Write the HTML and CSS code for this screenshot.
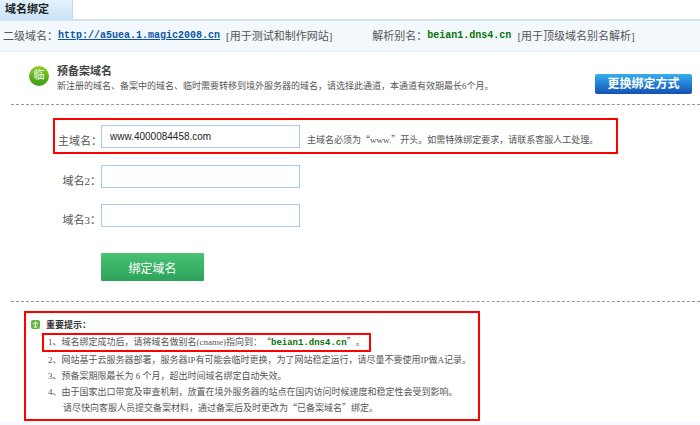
FILE: index.html
```html
<!DOCTYPE html>
<html lang="zh-CN">
<head>
  <meta charset="UTF-8">
  <meta name="viewport" content="width=device-width, initial-scale=1.0">
  <title>域名绑定</title>
  <link rel="stylesheet" href="styles.css">
</head>
<body>
  <div class="tabs">
    <h1 class="tab">域名绑定</h1>
  </div>

  <div class="info-bar">
    <div class="info">
      <span>二级域名：</span>
      <a class="host" href="http://a5uea.1.magic2008.cn">http://a5uea.1.magic2008.cn</a>
      <span class="note">[用于测试和制作网站]</span>
    </div>
    <div class="info">
      <span>解析别名：</span>
      <b class="host alias">beian1.dns4.cn</b>
      <span class="note">[用于顶级域名别名解析]</span>
    </div>
  </div>

  <div class="intro">
    <span class="badge">临</span>
    <div class="intro-text">
      <h2>预备案域名</h2>
      <p>新注册的域名、备案中的域名、临时需要转移到境外服务器的域名，请选择此通道，本通道有效期最长6个月。</p>
    </div>
    <button class="switch-btn" type="button">更换绑定方式</button>
  </div>

  <form class="bind-form">
    <div class="field marked">
      <label for="domain1">主域名：</label>
      <input type="text" id="domain1" value="www.4000084458.com">
      <span class="hint">主域名必须为<span class="quote">“</span>www.<span class="quote">”</span>开头。如需特殊绑定要求，请联系客服人工处理。</span>
    </div>
    <div class="field">
      <label for="domain2">域名2：</label>
      <input type="text" id="domain2">
    </div>
    <div class="field">
      <label for="domain3">域名3：</label>
      <input type="text" id="domain3">
    </div>
    <button class="submit-btn" type="button">绑定域名</button>
  </form>

  <div class="tips-area">
    <div class="tips">
      <h3>
        <svg class="tips-icon" width="9" height="9" viewBox="0 0 9 9">
          <rect width="9" height="9" rx="2" fill="#62b83c"/>
          <path d="M2 4.2 4.5 2 7 4.2M4.5 3v4M3 7h3" fill="none" stroke="#fff" stroke-width="1"/>
        </svg>
        重要提示：
      </h3>
      <ol>
        <li class="marked">1、域名绑定成功后，请将域名做别名(cname)指向到：<span class="quote">“</span><b class="cname">beian1.dns4.cn</b><span class="quote">”</span>。</li>
        <li>2、网站基于云服务器部署，服务器IP有可能会临时更换，为了网站稳定运行，请尽量不要使用IP做A记录。</li>
        <li>3、预备案期限最长为 6 个月，超出时间域名绑定自动失效。</li>
        <li>4、由于国家出口带宽及审查机制，放置在境外服务器的站点在国内访问时候速度和稳定性会受到影响。</li>
        <li class="more">请尽快向客服人员提交备案材料，通过备案后及时更改为<span class="quote">“</span>已备案域名<span class="quote">”</span>绑定。</li>
      </ol>
    </div>
  </div>
  <div class="page-foot"></div>
</body>
</html>
```
FILE: styles.css
```css
* {
  box-sizing: border-box;
}
body {
  margin: 0;
  background: #fff;
  color: #555;
  font-family: "Liberation Serif", "Noto Sans CJK SC", serif;
  font-size: 9px;
  text-spacing-trim: space-all;
}
h1, h2, h3, p, ol {
  margin: 0;
  padding: 0;
}
.tabs {
  display: flex;
  height: 21px;
  border-bottom: 2px solid #d3e4f1;
}
.tab {
  width: 73px;
  padding-left: 5px;
  border-right: 1px solid #c0d9ec;
  background: linear-gradient(#e4f2fc, #c9e3f7);
  color: #222;
  font-size: 11px;
  line-height: 18px;
}
.info-bar {
  display: flex;
  gap: 40px;
  height: 31px;
  padding-left: 3px;
  background: #f2f8fc;
  border-bottom: 1px solid #e9f2f9;
  font-size: 11px;
  line-height: 30px;
  white-space: nowrap;
}
.info {
  display: flex;
}
.host {
  color: #0b55a8;
  font-family: "Liberation Mono", monospace;
  font-size: 10px;
  font-weight: bold;
}
.alias {
  color: #0a720a;
}
.note {
  margin-left: 6px;
}
.intro {
  display: flex;
  margin-left: 11px;
  padding: 12px 8px 10px 18px;
  border-bottom: 1px dashed #999;
}
.badge {
  width: 20px;
  height: 20px;
  margin-top: 2px;
  border-radius: 50%;
  background: linear-gradient(#8ccf2c, #3c9a14);
  color: #fff;
  font-size: 11px;
  line-height: 19px;
  text-align: center;
}
.intro-text {
  flex: 1;
  margin-left: 8px;
  white-space: nowrap;
}
.intro h2 {
  color: #444;
  font-size: 11px;
  line-height: 15px;
}
.intro p {
  line-height: 15px;
}
button {
  padding: 0;
  border: none;
  font-family: "Liberation Sans", "Noto Sans CJK SC", sans-serif;
  color: #fff;
  font-size: 12px;
  cursor: pointer;
}
.switch-btn {
  align-self: flex-end;
  width: 97px;
  height: 20px;
  border-radius: 2px;
  background: linear-gradient(#35aef0, #1451b4);
  font-weight: bold;
  line-height: 18px;
}
.bind-form {
  margin-left: 11px;
  padding: 13px 0 20px 42px;
  border-bottom: 1px dashed #999;
}
.field {
  display: flex;
  align-items: center;
  width: 565px;
  height: 39px;
  padding: 0 5px;
}
.field label {
  width: 43px;
  padding-top: 7px;
  font-size: 11px;
  text-align: right;
  white-space: nowrap;
}
.field input {
  width: 199px;
  height: 23px;
  padding: 0 8px;
  border: 1px solid #a6c8ec;
  color: #222;
  font-family: "Liberation Sans", Arial, sans-serif;
  font-size: 10px;
}
.hint {
  margin-left: 7px;
  padding-top: 7px;
}
.marked {
  border: 2px solid #f00;
}
.field.marked {
  height: 36px;
  margin-bottom: 3px;
  padding: 0 3px;
}
.quote {
  font-family: "Noto Sans CJK SC", sans-serif;
}
.submit-btn {
  display: block;
  width: 103px;
  height: 28px;
  margin: 18px 0 0 48px;
  border-radius: 1px;
  background: linear-gradient(#49c273, #2da35a);
}
.tips-area {
  padding: 9px 24px 1px;
}
.tips {
  max-width: 456px;
  padding: 2px 5px 3px;
  border: 2px solid #f00;
}
.tips h3 {
  display: flex;
  align-items: center;
  gap: 6px;
  height: 18px;
  color: #333;
  font-size: 9px;
}
.tips ol {
  list-style: none;
}
.tips li {
  padding-left: 17px;
  line-height: 16px;
  white-space: nowrap;
}
.tips li.marked {
  width: fit-content;
  margin-left: 11px;
  padding: 0 4px;
  line-height: 13px;
}
.tips li.more {
  padding-left: 32px;
}
.cname {
  color: #0a720a;
  font-family: "Liberation Mono", monospace;
}
.page-foot {
  height: 3px;
  background: #f5fbff;
}
```
